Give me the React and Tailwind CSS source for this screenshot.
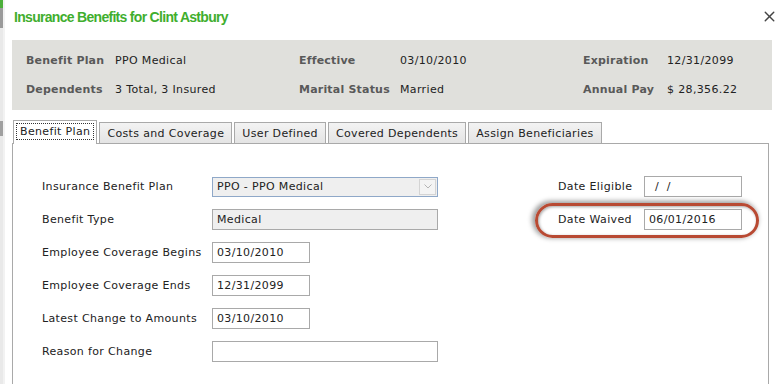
import { X } from "lucide-react";

const summary = [
  ["Benefit Plan", "PPO Medical", "Effective", "03/10/2010", "Expiration", "12/31/2099"],
  ["Dependents", "3 Total, 3 Insured", "Marital Status", "Married", "Annual Pay", "$ 28,356.22"],
];

const tabs = ["Costs and Coverage", "User Defined", "Covered Dependents", "Assign Beneficiaries"];

function Field({ label, children }) {
  return (
    <div className="flex h-[21px] items-center">
      <div className="w-[170px] shrink-0 pt-[2px]">{label}</div>
      {children}
    </div>
  );
}

function DateBox({ value, wide }) {
  return (
    <div
      className={`flex h-[21px] items-center border border-[#a9a9a9] bg-white pl-[4px] pt-[1px] ${wide ? "w-[226px]" : "w-[98px]"}`}
    >
      {value}
    </div>
  );
}

export default function App() {
  return (
    <div
      className="flex h-[384px] w-[781px] overflow-hidden bg-white text-[11px] tracking-[0.35px] text-[#222]"
      style={{ fontFamily: "'DejaVu Sans', Verdana, sans-serif" }}
    >
      {/* page behind the dialog */}
      <div className="flex w-[3px] shrink-0 flex-col bg-[#e9e9e9]">
        <div className="h-[8px] bg-[#4caf3a]" />
        <div className="h-[20px] bg-[#9a9a9a]" />
        <div className="h-[93px]" />
        <div className="h-[15px] bg-[#a0a0a0]" />
      </div>
      <div className="w-[2px] shrink-0 bg-[#f2f2f2]" />

      <div className="flex min-w-0 flex-1 flex-col pl-[7px] pr-[9px]">
        <div className="flex h-[40px] items-start justify-between pl-[2px] pt-[7px]">
          <h1
            className="text-[14px] font-bold tracking-[-0.7px] text-[#3fae2e]"
            style={{ fontFamily: "'Liberation Sans', Arial, sans-serif" }}
          >
            Insurance Benefits for Clint Astbury
          </h1>
          <X size={17} strokeWidth={2} className="mr-[-6px] mt-[1px] text-[#444]" />
        </div>

        <div className="grid grid-cols-[89px_184px_101px_183px_84px_1fr] gap-y-[11px] bg-[#e0e0dc] pb-[11px] pl-[14px] pt-[12px]">
          {summary.map((row) =>
            row.map((cell, i) => (
              <div
                key={cell}
                className={`leading-[18px] ${i % 2 === 0 ? "font-bold tracking-[0.2px] text-[#595959]" : ""}`}
              >
                {cell}
              </div>
            ))
          )}
        </div>

        <div className="mt-[10px] flex items-end gap-[2px] pl-[1px] pr-[3px]">
          <div className="relative z-10 mb-[-1px] flex h-[24px] items-start border border-b-0 border-[#a9a9a9] bg-white px-[2px] pt-[2px]">
            <span className="border border-dotted border-[#333] px-[3px] pt-[1px] leading-[14px]">Benefit Plan</span>
          </div>
          {tabs.map((t) => (
            <div
              key={t}
              className="flex h-[21px] items-center border border-b-0 border-[#a9a9a9] bg-gradient-to-b from-[#f3f3f3] to-[#e4e4e4] px-[7px] pt-[2px]"
            >
              {t}
            </div>
          ))}
        </div>

        <div className="mr-[3px] flex flex-1 border border-b-0 border-[#a9a9a9] pl-[29px] pt-[32px]">
          <div className="flex flex-col gap-[12px]">
            <Field label="Insurance Benefit Plan">
              <div className="flex h-[20px] w-[226px] items-center border border-[#8fa8c8] bg-[#efefef] pl-[4px]">
                <span className="flex-1 pt-[1px]">PPO - PPO Medical</span>
                <div className="mr-[1px] flex h-[16px] w-[17px] items-center justify-center border border-[#d4d4d4] bg-[#f4f4f4]">
                  <svg width="8" height="5" viewBox="0 0 8 5" fill="none">
                    <path d="M0.5 0.5 L4 4 L7.5 0.5" stroke="#b5b5b5" strokeWidth="1" />
                  </svg>
                </div>
              </div>
            </Field>
            <Field label="Benefit Type">
              <div className="flex h-[21px] w-[226px] items-center border border-[#a9a9a9] bg-[#efefef] pl-[4px] pt-[1px]">
                Medical
              </div>
            </Field>
            <Field label="Employee Coverage Begins">
              <DateBox value="03/10/2010" />
            </Field>
            <Field label="Employee Coverage Ends">
              <DateBox value="12/31/2099" />
            </Field>
            <Field label="Latest Change to Amounts">
              <DateBox value="03/10/2010" />
            </Field>
            <Field label="Reason for Change">
              <DateBox value="" wide />
            </Field>
          </div>

          <div className="relative ml-[120px] flex flex-col gap-[12px]">
            <div className="flex h-[21px] items-center">
              <div className="w-[86px] pt-[2px]">Date Eligible</div>
              <div className="flex h-[21px] w-[98px] items-center border border-[#a9a9a9] pl-[10px] pt-[1px]">/&nbsp;&nbsp;/</div>
            </div>
            <div className="flex h-[21px] items-center">
              <div className="w-[86px] pt-[2px]">Date Waived</div>
              <DateBox value="06/01/2016" />
            </div>
            <div className="pointer-events-none absolute left-[-23px] top-[27px] h-[35px] w-[224px] rounded-full border-[3px] border-[#b84a33] shadow-[-2px_-1px_5px_1px_rgba(0,0,0,0.4),inset_1px_1px_3px_rgba(0,0,0,0.35)]" />
          </div>
        </div>
      </div>
    </div>
  );
}
